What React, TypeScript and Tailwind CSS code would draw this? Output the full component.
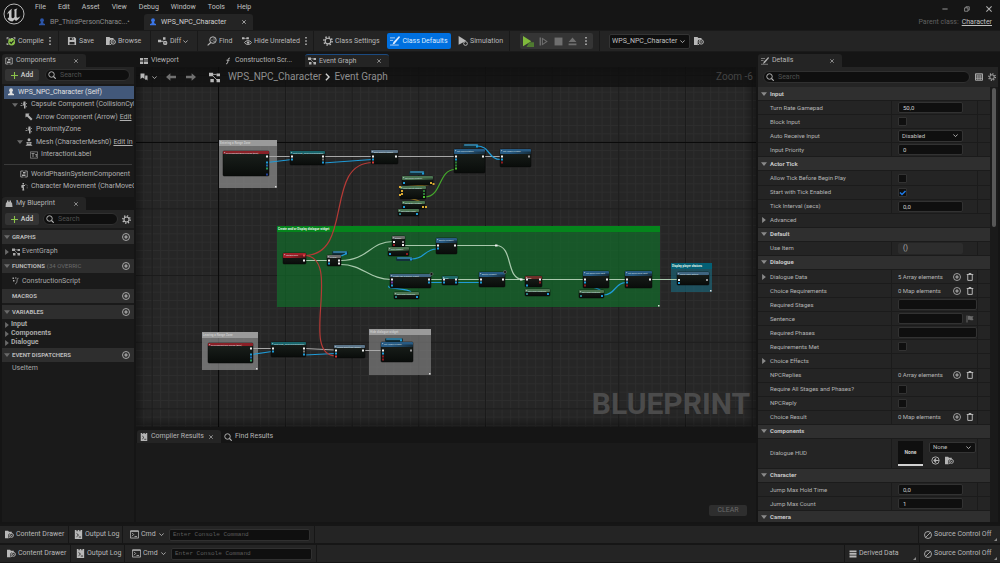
import type { ReactNode } from 'react';
import clsx from 'clsx';

const ICONS: Record<string, ReactNode> = {
  user: (
    <>
      <circle cx="8" cy="4.5" r="3.8" />
      <path d="M5.5 8h5v2.500l3.500 1.500v2.500H2V12l3.500-1.500z" />
    </>
  ),
  compile: (
    <>
      <path d="M1 2h3v1.500H2.500V5H1zM12 2h3v3h-1.500V3.500H12zM1 11h1.500v2H4v1.500H1zM4 4h3v2H4zM8 3h3v2H8z" />
      <circle cx="9" cy="9.500" r="5.500" fill="#8bc34a" />
      <path d="M6 9.500l2.300 2.300L12.300 7.500" fill="none" stroke="#1c1c1c" strokeWidth="1.800" />
    </>
  ),
  save: <path fillRule="evenodd" d="M1.500 1.500H12l2.500 2.500v10.500h-13zM4.500 2.500v4h6v-4zM4 9.500v4h8v-4z M7.800 3.200h1.500v2.600H7.800z" />,
  folder: (
    <>
      <path d="M0 1.500h5.500l1.500 1.500H12v3H7.500L6 8v6.500H0z" />
      <circle cx="11.500" cy="9.500" r="3.500" fill="none" stroke="currentColor" strokeWidth="1.600" />
      <path d="M9 12l-2.500 2.500M10 9.500h3" fill="none" stroke="currentColor" strokeWidth="1.600" />
    </>
  ),
  diff: (
    <>
      <path d="M0 6h5v4H0zM8 2h4v4H8zM5 7.500h4V9H5z" />
      <circle cx="11.500" cy="11" r="3.500" />
      <path d="M9.800 11h3.400" stroke="#222" strokeWidth="1.200" />
    </>
  ),
  find: (
    <>
      <circle cx="9.500" cy="6.500" r="5.200" fill="none" stroke="currentColor" strokeWidth="1.600" />
      <path d="M6 10.500L1 15" stroke="currentColor" strokeWidth="1.900" />
      <path d="M7 5.800h2v1.500H7zM10.300 4h2v1.500h-2zM10.300 7.500h2V9h-2z" />
    </>
  ),
  hide: (
    <>
      <path d="M0 2h4v3H0zM7 2h4v3H7zM4 3h3v1H4z" />
      <path d="M4 10.500c2.500-4 8.500-4 11.500 0-3 4-9 4-11.500 0z" fill="none" stroke="currentColor" strokeWidth="1.500" />
      <circle cx="9.800" cy="10.500" r="1.900" />
    </>
  ),
  gear: (
    <>
      <circle cx="8" cy="8" r="4.500" fill="none" stroke="currentColor" strokeWidth="1.800" />
      <circle cx="8" cy="8" r="6.600" fill="none" stroke="currentColor" strokeWidth="2.400" strokeDasharray="2.300 2.884" />
    </>
  ),
  pencil: (
    <>
      <path d="M14.500 0L16 2 8 11.500l-4 2.500 1.500-4.500z" />
      <path d="M0 3h8M0 7h5M0 14.500h14" stroke="currentColor" strokeWidth="1.200" />
    </>
  ),
  simulate: (
    <>
      <path d="M1 0l12 7.500L1 14z" />
      <circle cx="12" cy="12" r="3" fill="#222" stroke="currentColor" strokeWidth="1.500" />
    </>
  ),
  play: (
    <>
      <path d="M0 0l12 7.500L0 15z" fill="#7fb93c" />
      <path d="M9 9h7v7H5z" fill="#4f7a30" />
    </>
  ),
  step: (
    <>
      <path d="M1 1h2.500v14H1z" />
      <path d="M6 2.500l8 5.500-8 5.500z" fill="none" stroke="currentColor" strokeWidth="1.800" />
    </>
  ),
  stop: <path d="M1 1h14v14H1z" />,
  eject: <path d="M8 1l7 8H1zM1 11.500h14v3H1z" />,
  component: (
    <>
      <path d="M7 2H1.500v12H7M9 2h5.500v12H9" fill="none" stroke="currentColor" strokeWidth="1.600" />
      <path d="M6 4h5v3H6zM4 9h7v3H4z" />
    </>
  ),
  viewport: <path d="M0 2h6v5H0zM7.500 2H16v2H7.500zM7.500 5H16v2H7.500zM0 9h6v5H0zM7.500 9H16v5H7.500z" />,
  graph: (
    <>
      <path d="M0 1h6v5H0zM11 2h5v4h-5zM11 10h5v5h-5zM2 10h5v5H2z" />
      <path d="M6 3.500h5M5 5l7 7" stroke="currentColor" strokeWidth="1.200" />
    </>
  ),
  func: <path d="M12 2.500C8.500 1 8.500 4 8 7.500S7 14.500 4 13.500M5 6.500h6" fill="none" stroke="currentColor" strokeWidth="1.900" />,
  construct: (
    <>
      <path d="M13 2.500c-3-.5-2.500 3-3 6s-1.500 5.500-4 5" fill="none" stroke="currentColor" strokeWidth="1.500" />
      <path d="M1 1h3v3H1zM6 1h3v2H6zM2 6h3v3H2z" />
    </>
  ),
  search: (
    <>
      <circle cx="7" cy="7" r="5.500" fill="none" stroke="currentColor" strokeWidth="1.900" />
      <path d="M11 11l4.500 4.500" stroke="currentColor" strokeWidth="2.200" />
    </>
  ),
  bookmark: <path d="M1 1h8v11L5 9l-4 3zM10.500 5H15v10l-3-2.500-2 1.500z" />,
  back: <path d="M7 2v4h9v4H7v4L0 8z" />,
  forward: <path d="M9 2v4H0v4h9v4l7-6z" />,
  chevron: <path d="M1 4.500l7 7 7-7" fill="none" stroke="currentColor" strokeWidth="2.800" />,
  down: <path d="M0 3h16l-8 10z" />,
  right: <path d="M3 0v16l10-8z" />,
  dots: <path d="M6.500 0h3v3h-3zM6.500 6.500h3v3h-3zM6.500 13h3v3h-3z" />,
  plus: <path d="M8 0v16M0 8h16" stroke="currentColor" strokeWidth="2.500" />,
  close: <path d="M1 1l14 14M15 1L1 15" stroke="currentColor" strokeWidth="2.800" />,
  addCircle: (
    <>
      <circle cx="8" cy="8" r="7" fill="none" stroke="currentColor" strokeWidth="1.700" />
      <path d="M8 4.500v7M4.500 8h7" stroke="currentColor" strokeWidth="2.200" />
    </>
  ),
  trash: (
    <>
      <path d="M1.500 2h13v2h-13zM5.500 0h5v2h-5z" />
      <path d="M3.500 4v10.800h9V4" fill="none" stroke="currentColor" strokeWidth="2" />
    </>
  ),
  capsule: (
    <>
      <path d="M7 1h4v14H8V9H6z" />
      <path d="M2 4l3 2M1 9h4M14 4l-3 3M14 12l-3-2" stroke="currentColor" strokeWidth="1.500" />
    </>
  ),
  arrow: <path d="M1 1h8L7 4l8 8-3 3-8-8-3 2z" />,
  mesh: (
    <>
      <circle cx="8" cy="3.500" r="3" />
      <path d="M3 8h10v3h-2.500V9.500h-5V11H3zM5 11h6l4 4.500H1z" />
    </>
  ),
  text: (
    <>
      <path d="M.7 1.700h14.600v12.600H.7z" fill="none" stroke="currentColor" strokeWidth="1.200" />
      <path d="M3 4.500h6v1.500H6.800V12H5.200V6H3zM10.500 6.500h4v1.300h-1.300V12h-1.500V7.800h-1.200z" />
    </>
  ),
  movement: (
    <>
      <path d="M5 0h3v3H5zM3 4h7v2H7.500l1 9h-4l1-5-3-1z" />
      <path d="M11 2h1.500v1.500H11zM13.500 5H15v1.500h-1.500zM13.500 9H15v1.500h-1.500z" />
    </>
  ),
  blueprint: <path d="M4 1h3v3h2V1h3v4h2l1 9H1L2 5h2z" />,
  log: (
    <>
      <path d="M1.500 0h3v2h2V0h3v2h2V0h3v16h-13z" />
      <path d="M4.500 6l3.500 3-3.500 3M8.500 12.500h4" fill="none" stroke="#222" strokeWidth="1.500" />
    </>
  ),
  terminal: (
    <>
      <path d="M.7 1.700h14.600v12.600H.7z" fill="none" stroke="currentColor" strokeWidth="1.500" />
      <path d="M3.500 5l3 3-3 3M8 11.500h4.500" fill="none" stroke="currentColor" strokeWidth="1.500" />
      <path d="M1 1h14v2H1z" />
    </>
  ),
  database: <path d="M1 1h14v3.500H1zM1 6h14v3.500H1zM1 11h14v4H1z" />,
  off: (
    <>
      <circle cx="8" cy="8" r="7" fill="none" stroke="currentColor" strokeWidth="1.700" />
      <path d="M3 13L13 3" stroke="currentColor" strokeWidth="1.700" />
    </>
  ),
  flag: <path d="M1 1h2v14H1zM4 2c3-1.500 5 2 11 0l-2 4 2 4c-6 2-8-1.500-11 0z" />,
  grid: (
    <>
      <path d="M1 1.500h14v13H1z" fill="none" stroke="currentColor" strokeWidth="1.800" />
      <path d="M1 4h14M1 8h14M1 11.300h14M5.700 4v10M10.300 4v10" stroke="currentColor" strokeWidth="1.500" />
    </>
  ),
  use: (
    <>
      <circle cx="8" cy="8" r="6.500" fill="none" stroke="currentColor" strokeWidth="1.600" />
      <path d="M14 8H6M9 4.500L5.500 8 9 11.500" fill="none" stroke="currentColor" strokeWidth="2.200" />
    </>
  ),
  minimize: <path d="M1 8h14" stroke="currentColor" strokeWidth="2.200" />,
  restore: (
    <>
      <path d="M1.500 5h9v9h-9z" fill="none" stroke="currentColor" strokeWidth="1.800" />
      <path d="M5 5V2h9v9h-3" fill="none" stroke="currentColor" strokeWidth="1.800" />
    </>
  ),
};

function Icon({ name, className = 'size-[9px]' }: { name: string; className?: string }) {
  return (
    <svg viewBox="0 0 16 16" fill="currentColor" aria-hidden="true" className={clsx('shrink-0', className)}>
      {ICONS[name]}
    </svg>
  );
}

function Header() {
  return (
    <header className="flex h-[30px] shrink-0 bg-[#151515]">
      <svg viewBox="0 0 44 44" className="ml-[3px] mt-[3px] size-[22px] shrink-0" aria-label="Unreal Engine">
        <circle cx="22" cy="22" r="20" fill="#111" stroke="#b8b8b8" strokeWidth="2" />
        <path
          d="M8 24c1-6 5-10 11-13-2 2-2 3-2 5v12c0 2 2 3 4 2l2-2V16c0-2-1-2-2-2 3-1 5-3 8-3-2 2-2 3-2 5v11c0 2 1 3 3 2 2 0 4-2 5-4-1 5-5 9-9 11l-3-3-4 4c-5 0-9-3-10-7 2 0 3-1 3-3v-5c0-2-2-2-4 2z"
          fill="#c4c4c4"
        />
      </svg>
      <div className="flex min-w-0 flex-1 flex-col pl-[9px]">
        <nav className="flex h-[14px] items-center gap-[12px] pl-px text-[7px] text-[#c0c0c0]">
          {['File', 'Edit', 'Asset', 'View', 'Debug', 'Window', 'Tools', 'Help'].map((item) => (
            <button key={item}>{item}</button>
          ))}
        </nav>
        <div className="flex h-[16px] text-[7px]">
          <button className="flex w-[110px] items-center pl-[4px] text-[#8c8c8c]">
            <Icon name="user" className="mr-[4px] size-[8px] text-[#2c55a8]" />
            BP_ThirdPersonCharac...•
          </button>
          <div className="flex w-[109px] items-center rounded-t-[3px] bg-[#242424] pl-[5px] text-[#d0d0d0]">
            <Icon name="user" className="mr-[4px] size-[8px] text-[#3b76e8]" />
            WPS_NPC_Character
            <button aria-label="Close tab" className="ml-auto mr-[7px]">
              <Icon name="close" className="size-[4px]" />
            </button>
          </div>
        </div>
      </div>
      <div className="flex flex-col items-end pr-[8px] text-[7px]">
        <div className="flex h-[17px] items-center gap-[16px] text-[#b0b0b0]">
          <button aria-label="Minimize"><Icon name="minimize" className="size-[6px]" /></button>
          <button aria-label="Restore"><Icon name="restore" className="size-[6px]" /></button>
          <button aria-label="Close"><Icon name="close" className="size-[6px]" /></button>
        </div>
        <p className="flex gap-[3px] leading-[10px] text-[#606060]">
          Parent class:
          <a href="#character" className="text-[#c0c0c0] underline">Character</a>
        </p>
      </div>
    </header>
  );
}

type ToolButtonProps = { icon: string; label: string; className?: string; children?: ReactNode };

function ToolButton({ icon, label, className, children }: ToolButtonProps) {
  return (
    <button className={clsx('flex h-[16px] shrink-0 items-center gap-[2px] whitespace-nowrap', className)}>
      <Icon name={icon} className="size-[10px]" />
      {label}
      {children}
    </button>
  );
}

function ToolGroup({ className, children }: { className: string; children: ReactNode }) {
  return <div className={clsx('flex h-full shrink-0 items-center border-r border-[#191919]', className)}>{children}</div>;
}

function Toolbar() {
  return (
    <div className="flex h-[22px] shrink-0 items-center border-b border-t border-[#1a1a1a] bg-[#242424] text-[7px] text-[#b8b8b8]">
      <ToolGroup className="w-[59px] pl-[6px]">
        <ToolButton icon="compile" label="Compile" />
        <button aria-label="Compile options" className="ml-auto mr-[4px]"><Icon name="dots" className="size-[8px]" /></button>
      </ToolGroup>
      <ToolGroup className="w-[92px] pl-[8px]">
        <ToolButton icon="save" label="Save" className="w-[39px]" />
        <ToolButton icon="folder" label="Browse" />
      </ToolGroup>
      <ToolGroup className="w-[47px] pl-[7px]">
        <ToolButton icon="diff" label="Diff">
          <Icon name="chevron" className="size-[5px]" />
        </ToolButton>
      </ToolGroup>
      <ToolGroup className="w-[116px] pl-[9px]">
        <ToolButton icon="find" label="Find" className="w-[35px]" />
        <ToolButton icon="hide" label="Hide Unrelated" />
        <button aria-label="Hide options" className="ml-auto mr-[3px]"><Icon name="dots" className="size-[8px]" /></button>
      </ToolGroup>
      <ToolGroup className="w-[196px] pl-[9px]">
        <ToolButton icon="gear" label="Class Settings" className="w-[64px]" />
        <ToolButton icon="pencil" label="Class Defaults" className="mr-[7px] w-[64px] justify-center rounded-[2px] bg-[#0070e0] text-[#dcebff]" />
        <ToolButton icon="simulate" label="Simulation" />
      </ToolGroup>
      <ToolGroup className="w-[90px] pl-[10px]">
        <div className="flex h-[16px] w-[73px] items-center justify-between rounded-[2px] bg-[#353535] px-[3px] text-[#6f6f6f]">
          <button aria-label="Play"><Icon name="play" className="size-[11px]" /></button>
          <button aria-label="Step"><Icon name="step" /></button>
          <button aria-label="Stop"><Icon name="stop" /></button>
          <button aria-label="Eject"><Icon name="eject" /></button>
          <button aria-label="Play options" className="text-[#c0c0c0]"><Icon name="dots" className="size-[8px]" /></button>
        </div>
      </ToolGroup>
      <div className="ml-[9px] mr-[4px] w-[81px]">
        <Select id="debug-object" label="Debug object" value="WPS_NPC_Character" className="h-[15px] pl-[2px] text-[7px]" />
      </div>
      <button aria-label="Locate"><Icon name="folder" className="size-[10px]" /></button>
    </div>
  );
}

type SelectProps = { id: string; label?: string; value: string; className?: string };

function Select({ id, label, value, className }: SelectProps) {
  return (
    <div className="relative w-full">
      <select
        id={id}
        aria-label={label}
        defaultValue={value}
        className={clsx('block w-full appearance-none rounded-[2px] border border-[#343434] bg-[#0f0f0f] text-[#c0c0c0]', className)}
      >
        <option>{value}</option>
      </select>
      <span className="pointer-events-none absolute inset-y-0 right-[5px] flex items-center text-[#c0c0c0]">
        <Icon name="chevron" className="size-[5px]" />
      </span>
    </div>
  );
}

type TabProps = { icon: string; label: string; active?: boolean; closable?: boolean; accent?: boolean };

function Tab({ icon, label, active, closable, accent }: TabProps) {
  return (
    <div
      className={clsx(
        'flex h-[13px] w-[84px] shrink-0 items-center gap-[3px] whitespace-nowrap rounded-t-[3px] pl-[3px] text-[7px] text-[#b4b4b4]',
        active && 'bg-[#242424]',
        accent && 'border-t border-[#1b4a80]',
      )}
    >
      <Icon name={icon} className="size-[8px]" />
      <span>{label}</span>
      {closable && (
        <button aria-label={`Close ${label}`} className="ml-auto mr-[8px]">
          <Icon name="close" className="size-[4px]" />
        </button>
      )}
    </div>
  );
}

function SearchBox({ label }: { label: string }) {
  return (
    <label className="flex h-[12px] min-w-0 flex-1 items-center gap-[4px] rounded-full border border-[#303030] bg-[#0f0f0f] px-[2px]">
      <Icon name="search" className="size-[8px] text-[#b8b8b8]" />
      <input aria-label={label} placeholder="Search" className="w-full min-w-0 bg-transparent text-[7px] outline-none placeholder:text-[#505050]" />
    </label>
  );
}

function AddButton() {
  return (
    <button className="flex h-[12px] w-[34px] shrink-0 items-center justify-center gap-[3px] rounded-[2px] bg-[#343434] text-[7px] font-medium text-[#d0d0d0]">
      <Icon name="plus" className="size-[7px] text-[#8bc34a]" />
      Add
    </button>
  );
}

type TreeItem = { icon: string; label: string; indent: string; open?: boolean; link?: string; selected?: boolean };

const components: TreeItem[] = [
  { icon: 'user', label: 'WPS_NPC_Character (Self)', indent: 'pl-[3px]', selected: true },
  { icon: 'capsule', label: 'Capsule Component (CollisionCyli', indent: 'pl-[8px]', open: true },
  { icon: 'arrow', label: 'Arrow Component (Arrow)', indent: 'pl-[21px]', link: 'Edit' },
  { icon: 'capsule', label: 'ProximityZone', indent: 'pl-[21px]' },
  { icon: 'mesh', label: 'Mesh (CharacterMesh0)', indent: 'pl-[13px]', open: true, link: 'Edit in' },
  { icon: 'text', label: 'InteractionLabel', indent: 'pl-[26px]' },
];

const extraComponents: TreeItem[] = [
  { icon: 'component', label: 'WorldPhasinSystemComponent', indent: 'pl-[16px]' },
  { icon: 'movement', label: 'Character Movement (CharMoveC', indent: 'pl-[16px]' },
];

function TreeRow({ item }: { item: TreeItem }) {
  return (
    <li
      className={clsx(
        'flex items-center gap-[2px] whitespace-nowrap',
        item.indent,
        item.selected ? 'bg-[#42587a] text-[#e0e0e0]' : 'text-[#b0b0b0]',
      )}
    >
      {item.open && <Icon name="down" className="size-[6px] text-[#6a6a6a]" />}
      <Icon name={item.icon} className="size-[8px]" />
      <span className="pl-px">{item.label}</span>
      {item.link && <a href="#edit" className="underline">{item.link}</a>}
    </li>
  );
}

function SectionHeader({ title, note, closed }: { title: string; note?: string; closed?: boolean }) {
  return (
    <div className="flex h-[14px] items-center bg-[#2e2e2e] pl-[2px] pr-[4px] text-[6px] font-bold text-[#b8b8b8]">
      <Icon name="down" className={clsx('mr-[2px] size-[6px] text-[#6a6a6a]', closed && 'invisible')} />
      {title}
      {note && <span className="ml-[2px] font-normal text-[#6a6a6a]">{note}</span>}
      <button aria-label={`Add to ${title}`} className="ml-auto"><Icon name="addCircle" className="size-[8px]" /></button>
    </div>
  );
}

function LeftColumn() {
  return (
    <aside className="flex w-[132px] shrink-0 flex-col text-[7px] text-[#a8a8a8]">
      <Tab icon="component" label="Components" active closable />
      <div className="flex h-[17px] items-center gap-[6px] bg-[#242424] pb-[3px] pl-[3px] pr-[4px] pt-[2px]">
        <AddButton />
        <SearchBox label="Search components" />
      </div>
      <div className="h-[113px] overflow-hidden bg-[#1a1a1a] px-[2px] pt-[2px]">
        <ul className="grid h-[75px] auto-rows-fr">
          {components.map((item) => <TreeRow key={item.label} item={item} />)}
        </ul>
        <hr className="my-[3px] border-[#3a3a3a]" />
        <ul className="grid h-[25px] auto-rows-fr">
          {extraComponents.map((item) => <TreeRow key={item.label} item={item} />)}
        </ul>
      </div>
      <Tab icon="blueprint" label="My Blueprint" active closable />
      <div className="flex h-[18px] items-center gap-[4px] bg-[#242424] px-[3px]">
        <AddButton />
        <SearchBox label="Search blueprint" />
        <button aria-label="Blueprint settings" className="text-[#c0c0c0]"><Icon name="gear" /></button>
      </div>
      <div className="flex-1 bg-[#1a1a1a] pt-[2px]">
        <SectionHeader title="GRAPHS" />
        <div className="flex h-[15px] items-center gap-[2px] pl-[2px]">
          <Icon name="right" className="size-[6px] text-[#6a6a6a]" />
          <Icon name="graph" className="size-[8px]" />
          EventGraph
        </div>
        <SectionHeader title="FUNCTIONS" note="(34 OVERRIC" />
        <div className="flex h-[16px] items-center gap-[2px] pl-[10px]">
          <Icon name="construct" className="size-[8px]" />
          ConstructionScript
        </div>
        <SectionHeader title="MACROS" closed />
        <div className="h-[2px]" />
        <SectionHeader title="VARIABLES" />
        <ul className="py-px font-bold">
          {['Input', 'Components', 'Dialogue'].map((name) => (
            <li key={name} className="flex h-[9px] items-center gap-px pl-[2px]">
              <Icon name="right" className="size-[6px] text-[#6a6a6a]" />
              {name}
            </li>
          ))}
        </ul>
        <SectionHeader title="EVENT DISPATCHERS" />
        <p className="pl-[10px] leading-[12px]">UseItem</p>
      </div>
    </aside>
  );
}

/* Graph canvas: node boxes in graph units, pin is the y of the first pin row */
type GraphNode = { x: number; y: number; w: number; h: number; color: string; title: string; head?: number; pin: number; ins?: string[]; outs?: string[] };

const WHITE = '#f0f0f0';
const BLUE = '#1f9ad6';
const RED = '#8c1a20';
const GREEN = '#2c7a35';
const YELLOW = '#d8a832';

const nodes: GraphNode[] = [
  { x: 223, y: 151, w: 46, h: 25, color: '#8a2027', title: 'On Component Begin Overlap (Zone)', pin: 155.5, outs: [WHITE, '', BLUE, '#1f6ab0', '#2c9a60', '', '#20409a'] },
  { x: 290, y: 151, w: 35, h: 14, color: '#17646a', title: 'Cast To BP_ThirdPersonCharacter', pin: 155.5, ins: [WHITE, BLUE], outs: [WHITE, '#777', BLUE] },
  { x: 371, y: 150, w: 27, h: 14, color: '#5b7488', title: 'Bind Event to Interact', pin: 155.5, ins: [WHITE, BLUE, '#d03a3a'], outs: [WHITE] },
  { x: 454, y: 149, w: 31, h: 24, color: '#275a82', title: 'Set World Rotation', head: 5, pin: 155.5, ins: [WHITE, BLUE, GREEN, GREEN, '#4bc030'], outs: [WHITE] },
  { x: 500, y: 149, w: 31, h: 18, color: '#275a82', title: 'Set Hidden in Game', head: 5, pin: 155.5, ins: [WHITE, BLUE, RED], outs: ['#999'] },
  { x: 402, y: 176, w: 31, h: 9, color: '#4a7350', title: 'Get World Location', head: 4, pin: 182, ins: [BLUE], outs: [YELLOW] },
  { x: 400, y: 186, w: 26, h: 13, color: '#4a7350', title: 'Find Look at Rotation', pin: 190, ins: [YELLOW, YELLOW], outs: [GREEN, GREEN, '#4bc030'] },
  { x: 402, y: 201, w: 23, h: 8, color: '#4a7350', title: 'Get Actor Location', pin: 206, ins: [BLUE], outs: [YELLOW] },
  { x: 398, y: 209, w: 21, h: 7, color: '#4a7350', title: 'Get Player Pawn', pin: 213, ins: ['#2a7d80'], outs: [BLUE] },
  { x: 283, y: 253, w: 23, h: 11, color: '#a01f28', title: 'StartDialogue', head: 5, pin: 259.5, outs: [WHITE] },
  { x: 327, y: 255, w: 14, h: 11, color: '#6a6a6a', title: 'Is Valid', pin: 259.5, ins: [WHITE, BLUE], outs: [WHITE, WHITE] },
  { x: 392, y: 236, w: 13, h: 11, color: '#6a6a6a', title: 'Branch', pin: 241, ins: [WHITE, RED], outs: ['#999', WHITE] },
  { x: 388, y: 247, w: 21, h: 9, color: '#4a7350', title: 'Is in Viewport', head: 4, pin: 253, ins: [BLUE], outs: [RED] },
  { x: 436, y: 238, w: 21, h: 16, color: '#275a82', title: 'Add to Viewport', head: 5, pin: 244.5, ins: [WHITE, BLUE], outs: [WHITE] },
  { x: 390, y: 274, w: 41, h: 14, color: '#3f6580', title: 'Create WBP Dialogue Widget', pin: 278.5, ins: [WHITE, '#7436a0', BLUE], outs: [WHITE, BLUE] },
  { x: 394, y: 292, w: 25, h: 7, color: '#4a7350', title: 'Get Player Controller', pin: 296, ins: ['#2a7d80'], outs: [BLUE] },
  { x: 442, y: 276, w: 16, h: 9, color: '#1f6a68', title: 'SET', pin: 278.5, ins: [WHITE, BLUE], outs: [WHITE, BLUE] },
  { x: 479, y: 272, w: 26, h: 15, color: '#275a82', title: 'Add to Viewport', head: 5, pin: 278.5, ins: [WHITE, BLUE], outs: [WHITE] },
  { x: 525, y: 276, w: 17, h: 11, color: '#6e2f2a', title: 'SET', pin: 278.5, ins: [WHITE, '', BLUE], outs: [WHITE, RED] },
  { x: 525, y: 289, w: 25, h: 7, color: '#4a7350', title: 'Get Player Controller', pin: 293, ins: ['#2a7d80'], outs: [BLUE] },
  { x: 583, y: 271, w: 26, h: 17, color: '#275a82', title: 'Set Ignore Look Input', head: 5, pin: 278.5, ins: [WHITE, BLUE, RED], outs: [WHITE] },
  { x: 579, y: 290, w: 25, h: 8, color: '#4a7350', title: 'Get Player Controller', pin: 295, ins: ['#2a7d80'], outs: [BLUE] },
  { x: 625, y: 271, w: 27, h: 17, color: '#275a82', title: 'Set Ignore Move Input', head: 5, pin: 278.5, ins: [WHITE, BLUE, RED], outs: [WHITE] },
  { x: 677, y: 272, w: 32, h: 13, color: '#3f6580', title: 'Show Player Options', pin: 279, ins: [WHITE, BLUE], outs: ['#999'] },
  { x: 208, y: 343, w: 45, h: 20, color: '#8a2027', title: 'On Component End Overlap (Zone)', pin: 347.5, outs: [WHITE, '', BLUE, '#1f6ab0', '#2c9a60'] },
  { x: 271, y: 342, w: 35, h: 15, color: '#17646a', title: 'Cast To BP_ThirdPersonCharacter', pin: 347.5, ins: [WHITE, BLUE], outs: [WHITE, '#777', BLUE] },
  { x: 334, y: 345, w: 31, h: 13, color: '#5b7488', title: 'Unbind Event from Interact', pin: 349.5, ins: [WHITE, BLUE, '#d03a3a'], outs: [WHITE] },
  { x: 381, y: 342, w: 32, h: 20, color: '#275a82', title: 'Set Hidden in Game', head: 5, pin: 349.5, ins: [WHITE, BLUE, RED, RED], outs: ['#999'] },
];

const pills = [
  { x: 463, y: 144, w: 16 },
  { x: 409, y: 171, w: 16 },
  { x: 332, y: 251, w: 16 },
  { x: 396, y: 257, w: 17 },
  { x: 385, y: 338, w: 18 },
];

const wires = [
  { d: 'M267 156.500H292M323 156.500H372M397 156.500H455M484 156.500H501', color: '#a8a8a8' },
  { d: 'M267 162.500L292 159.500M323 163L372 159.500M477 146C490 146 488 159.500 501 159.500', color: BLUE },
  { d: 'M425 197C442 197 438 169.500 455 169.500', color: '#45a82c' },
  { d: 'M432 184C422 187 408 184 401 189M401 193C404 201 420 196 425 207', color: '#a88424' },
  { d: 'M304 260.500H329M341 260.500C368 260.500 370 241.500 393 241.500M341 264.500C362 264.500 370 279.500 391 279.500', color: '#a9c9ad' },
  { d: 'M404 245.500H438M456 245.500H496C514 245.500 505 279.500 523 279.500', color: '#a9c9ad' },
  { d: 'M430 279.500H443M457 279.500H481M504 279.500H526M541 279.500H585M608 279.500H627M651 279.500H678', color: '#a9c9ad' },
  { d: 'M412 259C425 259 424 249 437 249M339 256C345 256 343 254 346 254M389 286C386 289 408 288 411 292M430 282.500H443M457 282.500H480M604 295C615 295 615 282.500 626 282.500M585 282C582 286 598 287 601 291', color: BLUE },
  { d: 'M252 348.500H272M305 348.500L335 350M364 350.500H382', color: '#a8a8a8' },
  { d: 'M252 354.500L272 351.500M305 355L335 353.500', color: BLUE },
  { d: 'M304 255.500C355 255.500 323 162.500 373 162.500M304 255.500C344 255.500 298 356 336 356', color: '#b53a36' },
];

const comments = [
  { x: 219, y: 140, w: 58, h: 48, title: 'Entering a Range Zone', head: '#9a9a9a', body: '#8c8c8c', opacity: 0.72, dim: true },
  { x: 277, y: 226, w: 383, h: 81, title: 'Create and/or Display dialogue widget', head: '#05851c', body: '#11702a', opacity: 0.66 },
  { x: 671, y: 263, w: 41, h: 29, title: 'Display player choices', head: '#036075', body: '#1a6a80', opacity: 0.62 },
  { x: 202, y: 332, w: 56, h: 38, title: 'Leaving a Range Zone', head: '#9a9a9a', body: '#8c8c8c', opacity: 0.72, dim: true },
  { x: 369, y: 329, w: 62, h: 46, title: 'Hide dialogue widget', head: '#9a9a9a', body: '#8c8c8c', opacity: 0.6, dim: true },
];

function Pins({ x, y, colors }: { x: number; y: number; colors: string[] }) {
  return (
    <>
      {colors.map((color, i) => color && <rect key={i} x={x} y={y + i * 3} width="2" height="2" fill={color} />)}
    </>
  );
}

function GraphDrawing() {
  return (
    <svg className="absolute inset-0 size-full" role="img" aria-label="Event graph">
      <defs>
        <pattern id="minor" width="8.333" height="8.333" patternUnits="userSpaceOnUse" x="218.300" y="141.700">
          <path d="M0 .5H8.333M.5 0V8.333" stroke="#2d2d2d" strokeWidth="1" />
        </pattern>
        <pattern id="major" width="66.667" height="66.667" patternUnits="userSpaceOnUse" x="218.300" y="141.700">
          <path d="M0 .5H66.667M.5 0V66.667" stroke="#1a1a1a" strokeWidth="1" />
        </pattern>
        <linearGradient id="body" x1="0" y1="0" x2="0" y2="1">
          <stop offset="0" stopColor="#1b211d" />
          <stop offset="1" stopColor="#090c0a" />
        </linearGradient>
        <linearGradient id="shade" x1="0" y1="0" x2="1" y2="0">
          <stop offset="0.3" stopColor="#0c100e" stopOpacity="0" />
          <stop offset="1" stopColor="#0c100e" stopOpacity=".6" />
        </linearGradient>
      </defs>
      <g transform="translate(-136 -67)">
        <rect x="136" y="67" width="4000" height="4000" fill="#262626" />
        <rect x="136" y="67" width="4000" height="4000" fill="url(#minor)" />
        <rect x="136" y="67" width="4000" height="4000" fill="url(#major)" />
        <path d="M218.500 67V4000M136 142.500H4000" stroke="#0a0a0a" />
        {comments.map((c) => (
          <g key={c.title}>
            <rect x={c.x} y={c.y} width={c.w} height={c.h} fill={c.body} opacity={c.opacity} />
            <rect x={c.x} y={c.y} width={c.w} height="6" fill={c.head} />
            <text x={c.x + 1} y={c.y + 4} fontSize="3" fontWeight="bold" fill={c.dim ? '#c8c8c8' : '#e4f4e8'}>{c.title}</text>
            <rect x={c.x + c.w - 2} y={c.y + c.h - 2} width="1.500" height="1.500" fill="#ddd" />
          </g>
        ))}
        {pills.map((p) => (
          <g key={`${p.x}-${p.y}`}>
            <rect x={p.x} y={p.y} width={p.w} height="4" rx="1.500" fill="#12303a" />
            <rect x={p.x + 1} y={p.y} width={p.w - 2} height="2" rx=".7" fill="#2f7494" />
            <rect x={p.x + p.w - 3} y={p.y + 1.500} width="2" height="2" fill={BLUE} />
          </g>
        ))}
        {wires.map((w) => <path key={w.d} d={w.d} stroke={w.color} fill="none" strokeWidth="1.200" />)}
        {nodes.map((n) => {
          const head = n.head ?? 3;
          return (
            <g key={`${n.x}-${n.y}`}>
              <rect x={n.x} y={n.y} width={n.w} height={n.h} rx="1" fill="url(#body)" stroke="#0a0a0a" strokeWidth=".5" />
              <rect x={n.x} y={n.y} width={n.w} height={head} rx=".8" fill={n.color} />
              {head > 3 && <rect x={n.x} y={n.y + 2.500} width={n.w} height={head - 2.500} fill="url(#shade)" />}
              <rect x={n.x + 1} y={n.y + 1} width="1.200" height="1.200" fill="#cfd8dc" opacity=".6" />
              <text x={n.x + 3} y={n.y + 2.500} fontSize="2" fill="#d8e0e4">{n.title}</text>
              <Pins x={n.x + 1} y={n.pin} colors={n.ins ?? []} />
              <Pins x={n.x + n.w - 3} y={n.pin} colors={n.outs ?? []} />
            </g>
          );
        })}
        <rect x="495" y="244.500" width="2.500" height="2" fill={WHITE} />
        <rect x="520" y="278.500" width="2.500" height="2" fill={WHITE} />
        <path d="M432.500 183h2v2h-2zM399 186h2v2h-2zM399 194h2v2h-2zM425 206h2v2h-2z" fill={YELLOW} />
        <rect x="303" y="254.500" width="2" height="2" fill="#e04a4a" />
        <circle cx="431.500" cy="274" r="1.500" fill="#111" stroke="#888" strokeWidth=".5" />
        <circle cx="505" cy="272" r="1.500" fill="#111" stroke="#888" strokeWidth=".5" />
      </g>
    </svg>
  );
}

function CenterColumn() {
  return (
    <main className="flex min-w-0 flex-1 flex-col">
      <div className="flex pl-px">
        <Tab icon="viewport" label="Viewport" />
        <Tab icon="func" label="Construction Scr..." />
        <Tab icon="graph" label="Event Graph" active closable accent />
      </div>
      <div className="relative min-h-0 flex-1 overflow-hidden">
        <GraphDrawing />
        <div className="absolute inset-0 shadow-[inset_0_0_8px_4px_rgba(0,0,0,0.4)]" />
        <div className="absolute inset-x-0 top-0 flex h-[20px] items-center bg-[#0f0f0f]/75 text-[10px] text-[#8e8e8e]">
          <button aria-label="Bookmarks" className="flex w-[26px] items-center gap-[4px] pl-[4px] text-[#b8b8b8]">
            <Icon name="bookmark" className="size-[8px]" />
            <Icon name="chevron" className="size-[5px]" />
          </button>
          <button aria-label="Back" className="ml-[4px] w-[20px] text-[#707070]"><Icon name="back" className="size-[10px]" /></button>
          <button aria-label="Forward" className="w-[20px] text-[#707070]"><Icon name="forward" className="size-[10px]" /></button>
          <Icon name="graph" className="ml-[3px] mr-[8px] size-[11px] text-[#b8b8b8]" />
          <span>WPS_NPC_Character</span>
          <svg viewBox="0 0 6 10" className="mx-[4px] h-[8px] w-[5px]" aria-hidden="true">
            <path d="M1 1l4 4-4 4" fill="none" stroke="#d0d0d0" strokeWidth="1.800" />
          </svg>
          <span>Event Graph</span>
          <span className="ml-auto pr-[3px] text-[#444]">Zoom -6</span>
        </div>
        <p className="absolute bottom-[6px] right-[6px] text-[30px] font-bold leading-[34px] text-[#4b4b4b]">BLUEPRINT</p>
      </div>
      <div className="mt-[3px] flex h-[13px] pl-px">
        <Tab icon="log" label="Compiler Results" active closable />
        <Tab icon="search" label="Find Results" />
      </div>
      <div className="flex h-[79px] items-end justify-end bg-[#1a1a1a] pb-[6px] pr-[9px]">
        <button className="h-[11px] w-[38px] rounded-[2px] bg-[#2e2e2e] text-[7px] text-[#6a6a6a]">CLEAR</button>
      </div>
    </main>
  );
}

type Kind = 'header' | 'number' | 'wide' | 'check' | 'select' | 'binding' | 'array' | 'flag' | 'group';
type Property = { label: string; kind: Kind; value?: string; checked?: boolean; expand?: boolean };

const propertiesTop: Property[] = [
  { label: 'Input', kind: 'header' },
  { label: 'Turn Rate Gamepad', kind: 'number', value: '50,0' },
  { label: 'Block Input', kind: 'check' },
  { label: 'Auto Receive Input', kind: 'select', value: 'Disabled' },
  { label: 'Input Priority', kind: 'number', value: '0' },
  { label: 'Actor Tick', kind: 'header' },
  { label: 'Allow Tick Before Begin Play', kind: 'check' },
  { label: 'Start with Tick Enabled', kind: 'check', checked: true },
  { label: 'Tick Interval (secs)', kind: 'number', value: '0,0' },
  { label: 'Advanced', kind: 'group', expand: true },
  { label: 'Default', kind: 'header' },
  { label: 'Use Item', kind: 'binding', value: '()' },
  { label: 'Dialogue', kind: 'header' },
  { label: 'Dialogue Data', kind: 'array', value: '5 Array elements', expand: true },
  { label: 'Choice Requirements', kind: 'array', value: '0 Map elements' },
  { label: 'Required Stages', kind: 'wide' },
  { label: 'Sentence', kind: 'flag' },
  { label: 'Required Phases', kind: 'wide' },
  { label: 'Requirements Met', kind: 'check' },
  { label: 'Choice Effects', kind: 'group', expand: true },
  { label: 'NPCReplies', kind: 'array', value: '0 Array elements' },
  { label: 'Require All Stages and Phases?', kind: 'check' },
  { label: 'NPCReply', kind: 'check' },
  { label: 'Choice Result', kind: 'array', value: '0 Map elements' },
  { label: 'Components', kind: 'header' },
];

const propertiesBottom: Property[] = [
  { label: 'Character', kind: 'header' },
  { label: 'Jump Max Hold Time', kind: 'number', value: '0,0' },
  { label: 'Jump Max Count', kind: 'number', value: '1' },
];

const fieldClass = 'h-[11px] rounded-[2px] border border-[#323232] bg-[#0f0f0f] pl-[4px] text-[6px] text-[#d0d0d0] outline-none';

function PropertyValue({ item, id }: { item: Property; id: string }) {
  switch (item.kind) {
    case 'number':
      return <input id={id} defaultValue={item.value} className={clsx(fieldClass, 'w-[65px]')} />;
    case 'wide':
      return <input id={id} className={clsx(fieldClass, 'w-[79px]')} />;
    case 'flag':
      return (
        <>
          <input id={id} className={clsx(fieldClass, 'w-[65px]')} />
          <Icon name="flag" className="ml-[3px] size-[8px] text-[#6a6a6a]" />
        </>
      );
    case 'check':
      return (
        <span className="relative flex size-[9px]">
          <input id={id} type="checkbox" defaultChecked={item.checked} className="peer size-[9px] appearance-none rounded-[1px] border border-[#323232] bg-[#0f0f0f]" />
          <svg viewBox="0 0 9 9" className="pointer-events-none absolute inset-0 hidden size-[9px] peer-checked:block" aria-hidden="true">
            <path d="M2 4.500l2 2L7.500 3" fill="none" stroke="#1f7be8" strokeWidth="1.500" />
          </svg>
        </span>
      );
    case 'select':
      return <div className="w-[65px]"><Select id={id} value={item.value ?? ''} className="h-[12px] pl-[3px] text-[6px]" /></div>;
    case 'binding':
      return <button id={id} className="h-[11px] w-[65px] rounded-[2px] bg-[#2d2d2d] pl-[5px] text-left text-[7px] leading-[11px]">{item.value}</button>;
    case 'array':
      return (
        <>
          <output id={id} className="w-[55px] whitespace-nowrap">{item.value}</output>
          <button aria-label={`Add to ${item.label}`} className="mr-[5px]"><Icon name="addCircle" className="size-[8px]" /></button>
          <button aria-label={`Clear ${item.label}`}><Icon name="trash" className="size-[8px]" /></button>
        </>
      );
    default:
      return null;
  }
}

function PropertyRow({ item }: { item: Property }) {
  if (item.kind === 'header') {
    return (
      <h3 className="flex min-h-0 flex-1 items-center gap-[3px] border-b border-[#1b1b1b] bg-[#2f2f2f] pl-[3px] font-bold text-[#c8c8c8]">
        <Icon name="down" className="size-[6px] text-[#8a8a8a]" />
        {item.label}
      </h3>
    );
  }

  const id = item.label.toLowerCase().replace(/[^a-z]+/g, '-');
  return (
    <div className="flex min-h-0 flex-1 border-b border-[#1b1b1b]">
      <div className="flex min-w-0 flex-1 items-center gap-[3px] pl-[3px]">
        <Icon name="right" className={clsx('size-[6px] text-[#8a8a8a]', !item.expand && 'invisible')} />
        {item.kind === 'group' ? <span>{item.label}</span> : <label htmlFor={id}>{item.label}</label>}
      </div>
      <div className={clsx('flex w-[87px] items-center pl-[6px]', item.label !== 'Advanced' && 'border-x border-[#1b1b1b]')}>
        <PropertyValue item={item} id={id} />
      </div>
      <div className="w-[12px]" />
    </div>
  );
}

function DetailsPanel() {
  return (
    <aside className="flex w-[240px] shrink-0 flex-col text-[#b4b4b4]">
      <Tab icon="pencil" label="Details" active closable />
      <div className="flex h-[20px] items-center gap-[5px] bg-[#242424] pl-[5px] pr-[2px]">
        <SearchBox label="Search details" />
        <button aria-label="Property matrix"><Icon name="grid" className="size-[8px]" /></button>
        <button aria-label="Details settings"><Icon name="gear" className="size-[8px]" /></button>
      </div>
      <div className="flex min-h-0 flex-1 bg-[#1a1a1a]">
        <div className="flex min-w-0 flex-1 flex-col bg-[#242424] text-[6px]">
          {propertiesTop.map((item) => <PropertyRow key={item.label} item={item} />)}
          <div className="flex h-[30px] shrink-0 border-b border-[#1b1b1b]">
            <label htmlFor="dialogue-hud" className="flex min-w-0 flex-1 items-center pl-[12px]">Dialogue HUD</label>
            <div className="flex w-[87px] items-center gap-[6px] border-x border-[#1b1b1b] pl-[6px]">
              <div className="flex size-[25px] shrink-0 items-center justify-center border-b-2 border-[#d0d0d0] bg-[#0f0f0f] text-[5px] font-bold text-[#d0d0d0]">None</div>
              <div className="flex w-[47px] flex-col gap-[3px]">
                <Select id="dialogue-hud" value="None" className="h-[11px] pl-[3px] text-[6px]" />
                <div className="flex gap-[5px] pl-[2px]">
                  <button aria-label="Use selected asset"><Icon name="use" /></button>
                  <button aria-label="Browse to asset"><Icon name="folder" /></button>
                </div>
              </div>
            </div>
            <div className="w-[12px]" />
          </div>
          {propertiesBottom.map((item) => <PropertyRow key={item.label} item={item} />)}
          <h3 className="flex h-[11px] shrink-0 items-center gap-[3px] bg-[#2f2f2f] pl-[3px] font-bold text-[#c8c8c8]">
            <Icon name="down" className="size-[6px] text-[#8a8a8a]" />
            Camera
          </h3>
        </div>
        <div className="w-[8px] pl-[2px] pt-px">
          <div className="h-[139px] w-[4px] rounded-full bg-[#575757]" />
        </div>
      </div>
    </aside>
  );
}

function ResizeMark() {
  return (
    <svg viewBox="0 0 4 4" className="mb-[2px] ml-auto mr-[3px] size-[3px] self-end" aria-hidden="true">
      <path d="M4 0v4H0z" fill="#888" />
    </svg>
  );
}

function StatusBar({ id, inset, derived }: { id: string; inset?: boolean; derived?: boolean }) {
  const cell = 'flex h-full shrink-0 items-center gap-[2px] whitespace-nowrap border-[#161616]';
  return (
    <div className={clsx('flex h-[19px] shrink-0 items-center border-t-2 border-[#161616] bg-[#242424] text-[7px] text-[#b8b8b8]', inset && 'pl-[2px]')}>
      <button className={clsx(cell, 'w-[69px] border-r pl-[5px]')}><Icon name="folder" />Content Drawer</button>
      <button className={clsx(cell, 'w-[54px] border-r pl-[5px]')}><Icon name="log" />Output Log</button>
      <div className={clsx(cell, 'w-[192px] border-r pl-[7px]')}>
        <button className="flex w-[37px] items-center gap-[2px]">
          <Icon name="terminal" />
          Cmd
          <Icon name="chevron" className="ml-px size-[5px]" />
        </button>
        <input
          aria-label={`Console command ${id}`}
          placeholder="Enter Console Command"
          className="mr-[4px] h-[12px] min-w-0 flex-1 rounded-[2px] border border-[#303030] bg-[#0f0f0f] pl-[3px] font-['Liberation_Mono',monospace] text-[6px] outline-none placeholder:text-[#5c5c5c]"
        />
      </div>
      {derived && (
        <button className={clsx(cell, 'ml-auto w-[76px] border-x pl-[4px]')}>
          <Icon name="database" className="size-[8px]" />
          Derived Data
          <ResizeMark />
        </button>
      )}
      <button className={clsx(cell, derived ? 'w-[80px] pl-[4px]' : 'ml-auto w-[82px] border-l pl-[5px]')}>
        <Icon name="off" className="size-[8px]" />
        Source Control Off
        <ResizeMark />
      </button>
    </div>
  );
}

export default function App() {
  return (
    <div className="flex h-screen flex-col overflow-hidden bg-[#151515] pb-px font-['Roboto',sans-serif] leading-none">
      <Header />
      <Toolbar />
      <div className="flex min-h-0 flex-1 gap-[2px] px-[2px] py-[2px]">
        <LeftColumn />
        <CenterColumn />
        <DetailsPanel />
      </div>
      <StatusBar id="editor" />
      <StatusBar id="main" inset derived />
    </div>
  );
}
